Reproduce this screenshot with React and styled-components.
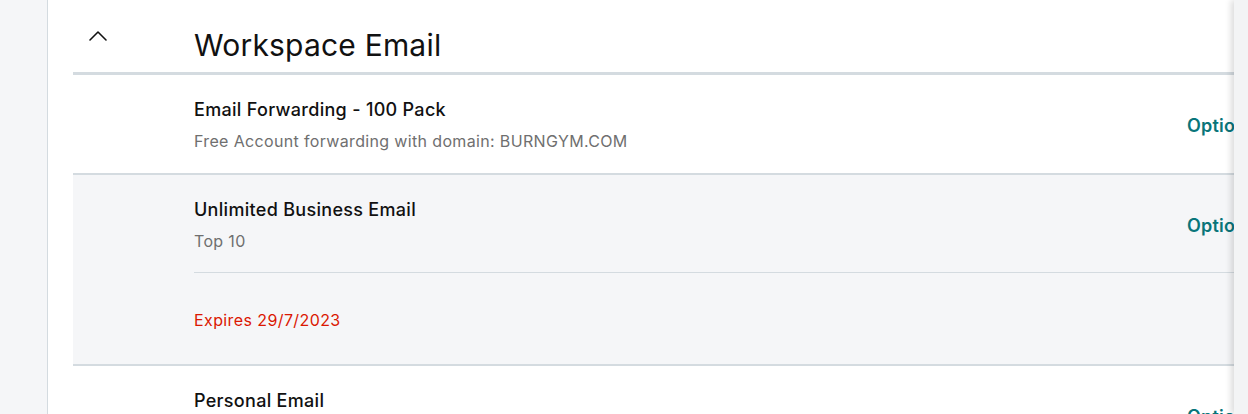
import styled, { createGlobalStyle } from "styled-components";

const GlobalStyle = createGlobalStyle`
  html, body {
    margin: 0;
    padding: 0;
    background: #fff;
  }
  body {
    font-family: "Inter", "Open Sans", sans-serif;
    color: #111;
  }
`;

const Page = styled.div`
  position: relative;
  display: flex;
  width: 1248px;
  height: 414px;
  overflow: hidden;
`;

const Rail = styled.aside`
  flex: 0 0 47px;
  background: #f5f6f8;
  border-right: 1px solid #d4dbe0;
`;

const Main = styled.main`
  flex: 1;
  background: #fff;
  padding-left: 25px;
  min-width: 0;
`;

const Section = styled.section`
  width: 1204px;
`;

const Header = styled.div`
  display: grid;
  grid-template-columns: 121px 1fr;
  align-items: start;
  height: 47px;
  padding-top: 25px;
  border-bottom: 3px solid #d4dbe0;
`;

const Toggle = styled.button`
  display: flex;
  align-items: center;
  justify-content: center;
  width: 50px;
  height: 40px;
  margin-top: -9px;
  padding: 0;
  border: 0;
  background: none;
  cursor: pointer;
`;

const Title = styled.h2`
  margin: 0;
  font-size: 30px;
  font-weight: 400;
  line-height: 40px;
  letter-spacing: 0.2px;
  color: #111;
`;

const Row = styled.div`
  display: grid;
  grid-template-columns: 121px 1fr 90px;
  background: ${(p) => (p.$shaded ? "#f5f6f8" : "#fff")};
  border-bottom: 2px solid #d4dbe0;
  padding: 23px 0 ${(p) => (p.$shaded ? "32px" : "20px")};
`;

const Top = styled.div`
  grid-column: 2;
  display: flex;
  flex-direction: column;
  gap: 7px;
`;

const Name = styled.div`
  font-size: 18px;
  font-weight: 500;
  line-height: 24px;
  letter-spacing: 0.3px;
  color: #111;
`;

const Sub = styled.div`
  font-size: 16px;
  line-height: 24px;
  letter-spacing: 0.35px;
  color: #6f6f6f;
`;

const Extra = styled.div`
  grid-column: 2 / 4;
`;

const Divider = styled.hr`
  margin: 19px 0 35px;
  border: 0;
  border-top: 1px solid #d4dbe0;
`;

const Expires = styled.div`
  font-size: 16px;
  line-height: 24px;
  letter-spacing: 0.4px;
  color: #db1802;
`;

const Action = styled.a`
  grid-column: 3;
  grid-row: 1;
  align-self: start;
  margin-top: 16px;
  font-size: 18px;
  font-weight: 600;
  line-height: 24px;
  letter-spacing: 0.2px;
  color: #09757a;
  text-decoration: none;
  white-space: nowrap;
`;

const Drawer = styled.div`
  position: absolute;
  top: 0;
  right: 0;
  bottom: 0;
  width: 14px;
  background: #f3f4f5;
  box-shadow: -3px 0 6px rgba(0, 0, 0, 0.14);
`;

const Chevron = () => (
  <svg width="20" height="12" viewBox="0 0 20 12" fill="none">
    <polyline
      points="2,10 10,2 18,10"
      stroke="#111"
      strokeWidth="1.6"
      strokeLinecap="round"
      strokeLinejoin="round"
    />
  </svg>
);

const products = [
  {
    name: "Email Forwarding - 100 Pack",
    sub: "Free Account forwarding with domain: BURNGYM.COM",
  },
  { name: "Unlimited Business Email", sub: "Top 10", expires: "Expires 29/7/2023" },
  { name: "Personal Email", sub: "" },
];

export default function App() {
  return (
    <Page>
      <GlobalStyle />
      <Rail />
      <Main>
        <Section>
          <Header>
            <Toggle aria-label="collapse">
              <Chevron />
            </Toggle>
            <Title>Workspace Email</Title>
          </Header>
          {products.map((p) => (
            <Row key={p.name} $shaded={!!p.expires}>
              <Top>
                <Name>{p.name}</Name>
                {p.sub && <Sub>{p.sub}</Sub>}
              </Top>
              <Action href="#">Options</Action>
              {p.expires && (
                <Extra>
                  <Divider />
                  <Expires>{p.expires}</Expires>
                </Extra>
              )}
            </Row>
          ))}
        </Section>
      </Main>
      <Drawer />
    </Page>
  );
}
